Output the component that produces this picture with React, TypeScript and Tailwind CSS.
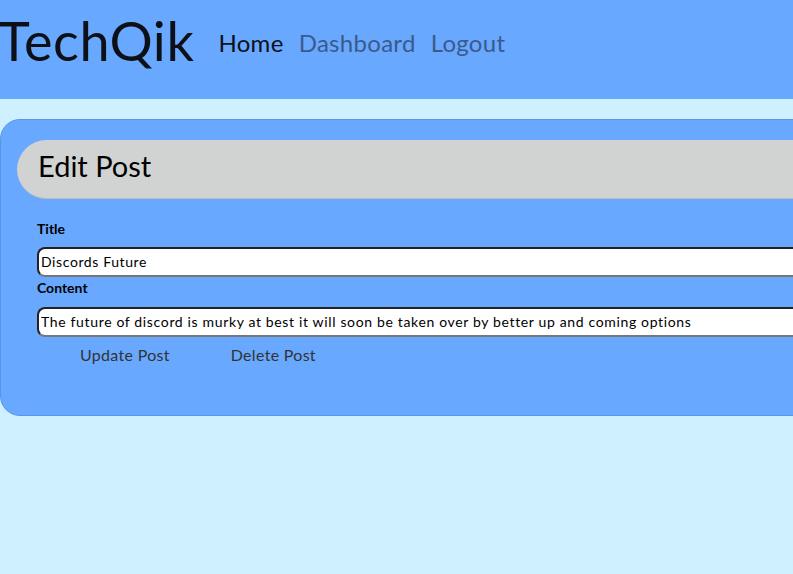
import { useState } from "react"

export default function App() {
    const [title, setTitle] = useState("Discords Future")
    const [content, setContent] = useState("The future of discord is murky at best it will soon be taken over by better up and coming options")

    return (
        <div className="min-h-screen overflow-hidden bg-[#cff0ff] font-['Lato',sans-serif] text-black">
            <header className="flex h-[99px] items-start bg-[#68a8ff] pt-[10px]">
                <h1 className="-ml-[2px] text-[54px] leading-[62px] tracking-[0.6px] text-[#0d1117]">TechQik</h1>
                <nav className="ml-[24px] flex gap-[15px] pt-[18px] text-[24px] leading-[30px] tracking-[0.3px]">
                    <a className="text-[#0d1117]">Home</a>
                    <a className="text-[#3b5a8c]">Dashboard</a>
                    <a className="text-[#3b5a8c]">Logout</a>
                </nav>
            </header>

            <main className="pt-[20px]">
                <div className="h-[297px] w-[900px] rounded-[20px] border border-[#5b96e6] bg-[#68a8ff] pl-[16px] pt-[20px]">
                    <div className="flex h-[59px] items-center rounded-l-full border-b border-[#bcbcbc] bg-[#d1d2d2] pb-[8px] pl-[21px]">
                        <h2 className="text-[29px] leading-none">Edit Post</h2>
                    </div>

                    <form className="flex flex-col pl-[20px] pt-[21px]">
                        <label className="text-[14px] font-bold leading-[18px]">Title</label>
                        <input
                            value={title}
                            onChange={(e) => setTitle(e.target.value)}
                            className="mt-[9px] h-[30px] w-[820px] rounded-[8px] border-2 border-b-[#777] border-l-[#222] border-r-[#777] border-t-[#222] bg-white px-[2px] pb-[2px] text-[14px] tracking-[0.6px] outline-none"
                        />
                        <label className="mt-[2px] text-[14px] font-bold leading-[18px]">Content</label>
                        <input
                            value={content}
                            onChange={(e) => setContent(e.target.value)}
                            className="mt-[10px] h-[30px] w-[820px] rounded-[8px] border-2 border-b-[#777] border-l-[#222] border-r-[#777] border-t-[#222] bg-white px-[2px] pb-[2px] text-[14px] tracking-[0.65px] outline-none"
                        />
                        <div className="mt-[6px] flex gap-[61px] pl-[43px] text-[16px] tracking-[0.3px] text-[#333]">
                            <button type="button">Update Post</button>
                            <button type="button">Delete Post</button>
                        </div>
                    </form>
                </div>
            </main>
        </div>
    )
}
